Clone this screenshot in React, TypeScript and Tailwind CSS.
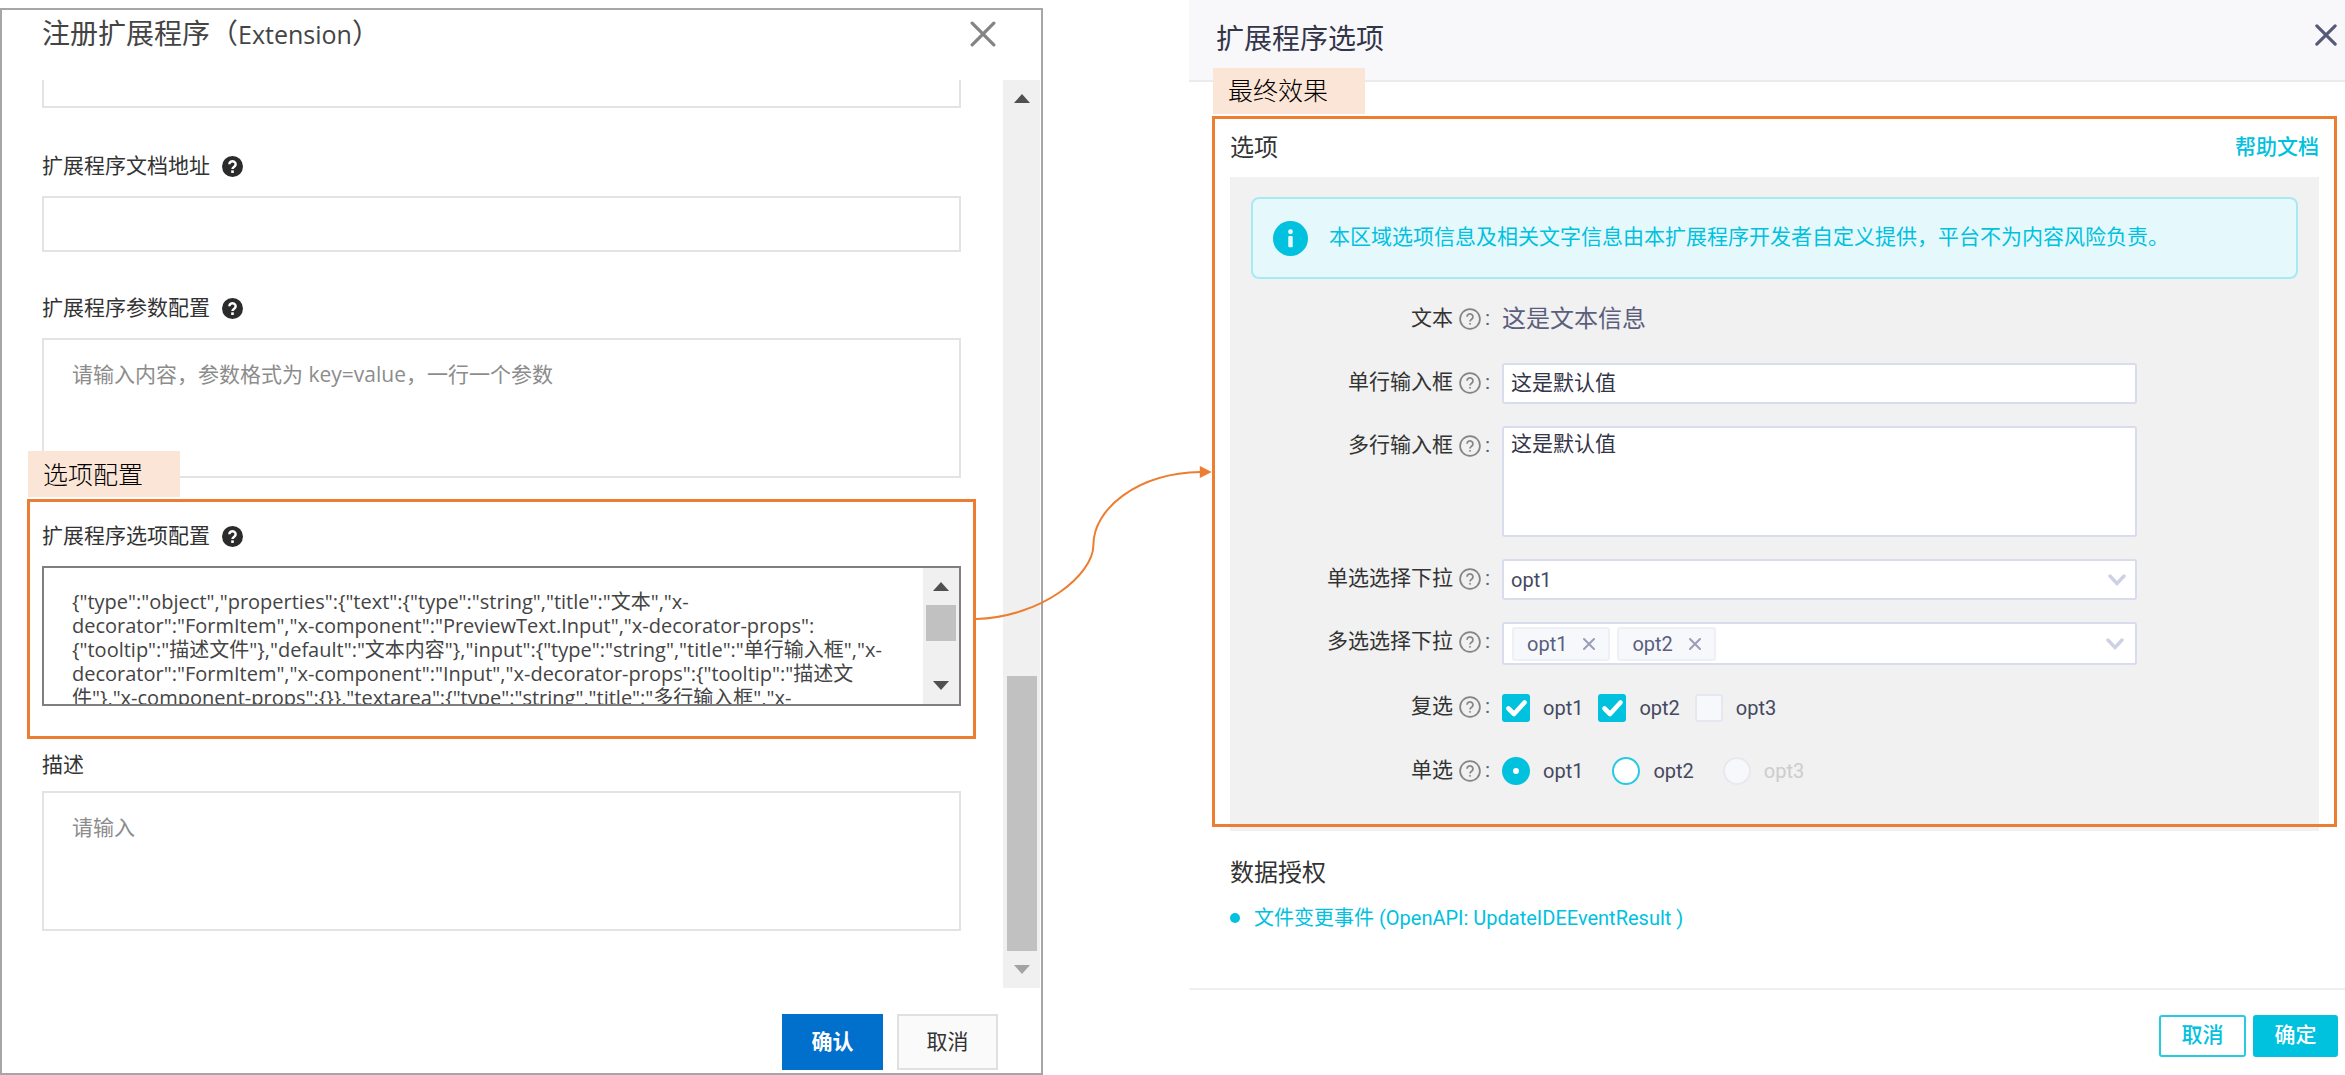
import React from "react";

const JSON_TEXT = `{"type":"object","properties":{"text":{"type":"string","title":"文本","x-
decorator":"FormItem","x-component":"PreviewText.Input","x-decorator-props":
{"tooltip":"描述文件"},"default":"文本内容"},"input":{"type":"string","title":"单行输入框","x-
decorator":"FormItem","x-component":"Input","x-decorator-props":{"tooltip":"描述文
件"},"x-component-props":{}},"textarea":{"type":"string","title":"多行输入框","x-`;

function CloseIcon({ className, weight }: { className: string; weight: number }) {
  return (
    <svg viewBox="0 0 24 24" className={className} fill="none" stroke="currentColor" strokeWidth={weight} strokeLinecap="round" aria-hidden="true">
      <path d="M2 2 L22 22 M22 2 L2 22" />
    </svg>
  );
}

function HelpSolid() {
  return (
    <svg viewBox="0 0 24 24" className="size-[21px] text-[#2b2b2b]" aria-hidden="true">
      <circle cx="12" cy="12" r="12" fill="currentColor" />
      <path d="M8.4 9.4a3.6 3.4 0 1 1 5.6 2.8c-1.4 1-2 1.3-2 2.6" fill="none" stroke="#fff" strokeWidth="2.8" />
      <rect x="10.5" y="16.4" width="3" height="3" fill="#fff" />
    </svg>
  );
}

function HelpOutline() {
  return (
    <svg viewBox="0 0 24 24" className="size-[22px] shrink-0 text-[#858585]" fill="none" stroke="currentColor" aria-hidden="true">
      <circle cx="12" cy="12" r="10.8" strokeWidth="1.9" />
      <path d="M8.8 9.6a3.2 3.1 0 1 1 4.9 2.6c-1.2.8-1.7 1.3-1.7 2.4" strokeWidth="1.9" />
      <circle cx="12" cy="17.3" r="0.6" fill="currentColor" strokeWidth="1" />
    </svg>
  );
}

function Triangle({ down, className }: { down?: boolean; className: string }) {
  return (
    <svg viewBox="0 0 16 9" className={className} fill="currentColor" aria-hidden="true">
      <path d={down ? "M0 0H16L8 9Z" : "M0 9H16L8 0Z"} />
    </svg>
  );
}

function Tag({ className, children }: { className: string; children: React.ReactNode }) {
  return (
    <div className={`absolute bottom-full flex h-[46px] w-[152px] items-center bg-[#fbe5d6] pt-0.5 pl-[15px] text-[25px] font-light text-black ${className}`}>
      {children}
    </div>
  );
}

function FieldLabel({ id, help, children }: { id: string; help?: boolean; children: React.ReactNode }) {
  return (
    <div className="flex h-8 items-center gap-3">
      <label htmlFor={id}>{children}</label>
      {help && <HelpSolid />}
    </div>
  );
}

function Connector() {
  return (
    <svg
      viewBox="0 0 237 160"
      preserveAspectRatio="none"
      className="pointer-events-none absolute -top-[39px] left-full z-10 ml-[3px] h-40 w-1/4 overflow-visible text-[#ed7d31]"
      aria-hidden="true"
    >
      <path d="M0 156C66 154 118 112 118 82C118 46 162 10 226 9" fill="none" stroke="currentColor" strokeWidth="2" />
      <path d="M225 3L237 9L225 15Z" fill="currentColor" />
    </svg>
  );
}

const leftArea =
  "block h-[140px] w-full resize-none overflow-hidden border-2 border-[#e3e3e3] bg-white px-7 pt-[22px] leading-6 text-[#444] outline-none placeholder:text-[#8c8c8c]";

function RegisterPanel() {
  return (
    <section className="mt-2 flex flex-col border-2 border-[#a6a6a6] bg-white font-['Open_Sans','Noto_Sans_CJK_SC',sans-serif] text-[21px] text-[#333]">
      <header className="flex h-[70px] items-start justify-between pt-0.5 pr-11 pl-10">
        <h1 className="text-[28px] leading-[42px] text-[#444]">
          注册扩展程序（<span className="text-[25px]">Extension</span>）
        </h1>
        <button type="button" aria-label="关闭" className="mt-2 flex size-7 items-center justify-center text-[#848484]">
          <CloseIcon className="size-[26px]" weight={3} />
        </button>
      </header>

      <div className="flex flex-1">
        <div className="min-w-0 flex-1 pr-[42px] pl-10">
          <input aria-label="扩展程序地址" className="block h-7 w-full border-2 border-t-0 border-[#e3e3e3] px-7 outline-none" />

          <div className="mt-[42px]">
            <FieldLabel id="doc-url" help>扩展程序文档地址</FieldLabel>
            <input id="doc-url" className="mt-3.5 block h-14 w-full border-2 border-[#e3e3e3] px-7 outline-none" />
          </div>

          <div className="mt-10">
            <FieldLabel id="params" help>扩展程序参数配置</FieldLabel>
            <textarea id="params" className={`mt-3.5 ${leftArea}`} placeholder="请输入内容，参数格式为 key=value，一行一个参数" />
          </div>

          <div className="relative -mx-[15px] mt-[21px] border-3 border-[#ed7d31] px-3 pt-[18px] pb-[30px]">
            <Tag className="-left-0.5 mb-[5px]">选项配置</Tag>
            <FieldLabel id="schema" help>扩展程序选项配置</FieldLabel>
            <div className="mt-3.5 flex h-[140px] border-2 border-[#7f7f7f] bg-white">
              <textarea
                id="schema"
                defaultValue={JSON_TEXT}
                wrap="off"
                className="min-w-0 flex-1 resize-none overflow-hidden pt-[22px] pl-7 text-[20px] leading-6 text-[#444] outline-none"
              />
              <div className="flex w-9 flex-col items-center bg-[#f0f0f0] py-3.5 text-[#505050]">
                <Triangle className="h-[9px] w-4" />
                <div className="mt-3.5 h-9 w-[30px] bg-[#c1c1c1]" />
                <Triangle down className="mt-auto h-[9px] w-4" />
              </div>
            </div>
            <Connector />
          </div>

          <div className="mt-2.5">
            <FieldLabel id="desc">描述</FieldLabel>
            <textarea id="desc" className={`mt-2.5 ${leftArea}`} placeholder="请输入" />
          </div>
        </div>

        <div className="mr-px mb-[-57px] flex w-[37px] flex-col items-center self-stretch bg-[#f0f0f0] py-3.5 text-[#505050]">
          <Triangle className="h-[9px] w-4" />
          <div className="mt-auto h-[275px] w-[30px] bg-[#c1c1c1]" />
          <Triangle down className="mt-3.5 h-[9px] w-4 text-[#a3a3a3]" />
        </div>
      </div>

      <footer className="mt-[83px] flex justify-end gap-3.5 pr-[43px] pb-[3px]">
        <button type="button" className="h-14 w-[101px] bg-[#0070cc] font-bold text-white">确认</button>
        <button type="button" className="h-14 w-[101px] border-2 border-[#e0e0e0] bg-[#fafafa]">取消</button>
      </footer>
    </section>
  );
}

function Row({ id, label, className, children }: { id?: string; label: string; className: string; children: React.ReactNode }) {
  return (
    <div className={`grid grid-cols-[251fr_635fr_161fr] ${className}`}>
      <div className="flex h-10 items-center justify-end gap-[6px] pr-3 text-[#333]">
        <label htmlFor={id}>{label}</label>
        <HelpOutline />
        <span className="-ml-0.5 text-[#5b5f7d]">:</span>
      </div>
      {children}
    </div>
  );
}

function Chevron() {
  return (
    <svg
      viewBox="0 0 18 12"
      className="pointer-events-none absolute top-1/2 right-[11px] h-3 w-[18px] -translate-y-1/2 text-[#ccd1e6]"
      fill="none"
      stroke="currentColor"
      strokeWidth="3.4"
      strokeLinecap="round"
      aria-hidden="true"
    >
      <path d="M2 2L9 9.5L16 2" />
    </svg>
  );
}

const box = "rounded-[3px] border-2 border-[#d8dcec] bg-white outline-none";

function Check({ name, checked }: { name: string; checked?: boolean }) {
  return (
    <label className="flex items-center gap-[13px]">
      <span className="relative size-7">
        <input
          type="checkbox"
          defaultChecked={checked}
          className="peer block size-7 appearance-none rounded-[3px] border-2 border-[#e6e7f0] bg-[#f7f8fb] checked:border-[#00c1de] checked:bg-[#00c1de]"
        />
        <svg viewBox="0 0 28 28" className="pointer-events-none absolute inset-0 hidden peer-checked:block" fill="none" stroke="#fff" strokeWidth="4.6" strokeLinecap="round" strokeLinejoin="round" aria-hidden="true">
          <path d="M6.5 14.5L12 20L22.5 8.5" />
        </svg>
      </span>
      {name}
    </label>
  );
}

function Radio({ name, checked, disabled }: { name: string; checked?: boolean; disabled?: boolean }) {
  return (
    <label className={`flex items-center gap-[13px] ${disabled ? "text-[#ccc]" : ""}`}>
      <input
        type="radio"
        name="single"
        defaultChecked={checked}
        disabled={disabled}
        className="size-7 appearance-none rounded-full border-2 border-[#26cbe3] bg-white checked:border-[11px] checked:border-[#00c1de] disabled:border-[#e8e9ee] disabled:bg-[#f7f8fb]"
      />
      {name}
    </label>
  );
}

function Chip({ name }: { name: string }) {
  return (
    <span className="flex h-[34px] items-center gap-4 rounded-[3px] border-2 border-[#eff0f5] bg-[#f7f8fb] px-[13px] text-[20px] text-[#5b5f7d]">
      {name}
      <button type="button" aria-label={`移除 ${name}`} className="text-[#9a9eb8]">
        <CloseIcon className="size-3" weight={4} />
      </button>
    </span>
  );
}

function OptionsPanel() {
  return (
    <section className="flex flex-col bg-white font-['Roboto','Noto_Sans_CJK_SC',sans-serif] text-[21px] text-[#333]">
      <header className="flex h-[82px] items-center justify-between border-b-2 border-[#ebebeb] bg-[#f8f8fb] pr-[5px] pl-[27px]">
        <h1 className="text-[28px] text-[#333548]">扩展程序选项</h1>
        <button type="button" aria-label="关闭" className="mt-[21px] flex size-7 items-center justify-center self-start text-[#565a78]">
          <CloseIcon className="size-[22px]" weight={3.4} />
        </button>
      </header>

      <div className="relative mt-[34px] mr-2 ml-[23px] px-[18px] pt-[3px]">
        <Tag className="left-px mb-0.5">最终效果</Tag>
        <div className="flex h-[58px] items-center justify-between">
          <h2 className="text-[24px]">选项</h2>
          <a href="#help" className="font-medium text-[#00c1de]">帮助文档</a>
        </div>

        <div className="-mb-1 bg-[#f1f1f1] px-[21px] pt-5 pb-11">
          <div className="flex h-[82px] items-center gap-[21px] rounded-lg border-2 border-[#a8eaf3] bg-[#e5f8fc] px-5 text-[#00c1de]">
            <svg viewBox="0 0 36 36" className="size-[35px] shrink-0" aria-hidden="true">
              <circle cx="18" cy="18" r="18" fill="currentColor" />
              <circle cx="18" cy="11" r="2.5" fill="#e5f8fc" />
              <rect x="15.7" y="15.5" width="4.6" height="11.5" rx="1" fill="#e5f8fc" />
            </svg>
            <p>本区域选项信息及相关文字信息由本扩展程序开发者自定义提供，平台不为内容风险负责。</p>
          </div>

          <form className="mt-5 flex flex-col gap-[22px]">
            <Row label="文本" className="h-[42px]">
              <p className="flex h-10 items-center text-[24px] text-[#5b5f7d]">这是文本信息</p>
            </Row>
            <Row id="single-line" label="单行输入框" className="h-[41px]">
              <input id="single-line" defaultValue="这是默认值" className={`w-full px-[7px] text-[#333548] ${box}`} />
            </Row>
            <Row id="multi-line" label="多行输入框" className="h-[111px]">
              <textarea id="multi-line" defaultValue="这是默认值" className={`block w-full resize-none px-[7px] leading-8 text-[#333548] ${box}`} />
            </Row>
            <Row id="single-select" label="单选选择下拉" className="h-[41px]">
              <div className="relative">
                <select id="single-select" className={`block size-full appearance-none px-[7px] text-[20px] text-[#454860] ${box}`}>
                  <option>opt1</option>
                  <option>opt2</option>
                  <option>opt3</option>
                </select>
                <Chevron />
              </div>
            </Row>
            <Row label="多选选择下拉" className="h-[43px]">
              <div className={`relative flex items-center gap-[7px] px-2 ${box}`}>
                <Chip name="opt1" />
                <Chip name="opt2" />
                <Chevron />
              </div>
            </Row>
            <Row label="复选" className="h-[42px]">
              <div className="flex items-center gap-[15px] text-[20px] text-[#454860]">
                <Check name="opt1" checked />
                <Check name="opt2" checked />
                <Check name="opt3" />
              </div>
            </Row>
            <Row label="单选" className="h-9">
              <div className="flex items-center gap-[29px] text-[20px] text-[#454860]">
                <Radio name="opt1" checked />
                <Radio name="opt2" />
                <Radio name="opt3" disabled />
              </div>
            </Row>
          </form>
        </div>
        <div className="pointer-events-none absolute inset-0 border-3 border-[#ed7d31]" />
      </div>

      <div className="mt-7 pr-[26px] pb-10 pl-[41px]">
        <h2 className="text-[24px] leading-9">数据授权</h2>
        <ul className="mt-[11px]">
          <li className="flex items-center gap-3.5 text-[20px] leading-8 text-[#00c1de]">
            <span className="size-2.5 rounded-full bg-[#00c1de]" />
            <a href="#event">文件变更事件 (OpenAPI: UpdateIDEEventResult )</a>
          </li>
        </ul>
      </div>

      <footer className="mt-auto flex h-[87px] justify-end gap-[7px] border-t-2 border-[#f0f0f0] pt-[25px] pr-[7px]">
        <button type="button" className="h-[42px] w-[87px] rounded-[3px] border-2 border-[#26cbe3] bg-white font-medium text-[#00c1de]">取消</button>
        <button type="button" className="h-[42px] w-[85px] rounded-[3px] bg-[#00c1de] font-medium text-white">确定</button>
      </footer>
    </section>
  );
}

export default function App() {
  return (
    <main className="grid min-h-screen grid-cols-[1043fr_1156fr] gap-x-[146px] bg-white">
      <RegisterPanel />
      <OptionsPanel />
    </main>
  );
}
